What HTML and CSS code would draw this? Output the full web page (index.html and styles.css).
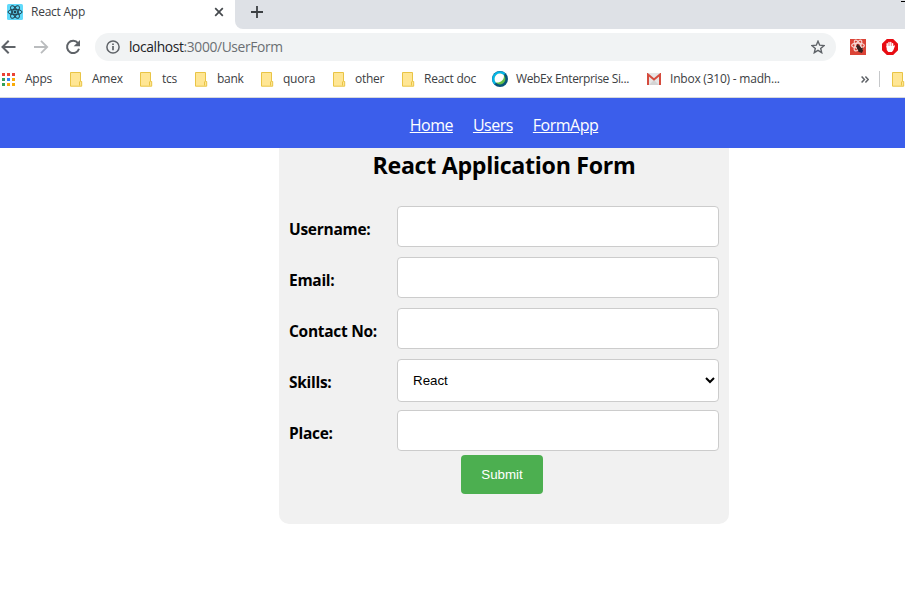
FILE: index.html
```html
<!DOCTYPE html>
<html lang="en">
<head>
<meta charset="utf-8">
<title>React App</title>
<link rel="stylesheet" href="styles.css">
</head>
<body>
<svg class="defs" width="0" height="0">
  <symbol id="folder" viewBox="0 0 13 15"><path d="M.5.5h10v9h1.2v4.7H.5z" fill="#ffe694" stroke="#e9c445"/><path d="M9.5 13.5v-4" fill="none" stroke="#e9c445"/></symbol>
</svg>
<header class="browser">
  <div class="tabstrip">
    <div class="tab">
      <svg class="favicon" width="16" height="16" viewBox="0 0 16 16"><rect width="16" height="16" rx="1.5" fill="#61dafb"/><g fill="none" stroke="#20404d" stroke-width="1"><ellipse cx="8" cy="8" rx="7" ry="2.7"/><ellipse cx="8" cy="8" rx="7" ry="2.7" transform="rotate(60 8 8)"/><ellipse cx="8" cy="8" rx="7" ry="2.7" transform="rotate(120 8 8)"/></g><circle cx="8" cy="8" r="1.4" fill="#20404d"/></svg>
      <span class="tab-title">React App</span>
      <svg class="close" width="10" height="10" viewBox="0 0 10 10"><path d="M1.2 1.2l7.6 7.6M8.8 1.2L1.2 8.8" stroke="#45494d" stroke-width="1.7"/></svg>
    </div>
    <div class="strip-rest">
      <svg width="12" height="12" viewBox="0 0 12 12"><path d="M6 0v12M0 6h12" stroke="#3c4043" stroke-width="1.8"/></svg>
      <span class="minimize"></span>
    </div>
  </div>
  <div class="toolbar">
    <svg class="back" width="16" height="16" viewBox="0 0 16 16"><path d="M15.5 8H3M8.7 1.8L2.5 8l6.2 6.2" fill="none" stroke="#5f6368" stroke-width="2"/></svg>
    <svg class="forward" width="16" height="16" viewBox="0 0 16 16"><path d="M0 8h12.8M7 1.8L13.2 8 7 14.2" fill="none" stroke="#babcbe" stroke-width="1.8"/></svg>
    <svg class="reload" width="16" height="16" viewBox="0 0 16 16"><path d="M13 4.2A6.1 6.1 0 1 0 14 9.7" fill="none" stroke="#5f6368" stroke-width="2"/><path d="M15 1v6.3H8.7z" fill="#5f6368"/></svg>
    <div class="omnibox">
      <svg width="14" height="14" viewBox="0 0 14 14"><circle cx="7" cy="7" r="6.1" fill="none" stroke="#5f6368" stroke-width="1.5"/><path d="M7 6v4.3M7 3.4v1.5" stroke="#5f6368" stroke-width="1.7"/></svg>
      <span class="url"><b>localhost</b>:3000/UserForm</span>
      <svg width="14" height="14" viewBox="0 0 14 14"><path d="M7 1.2l1.7 4 4.3.4-3.3 2.8 1 4.3L7 10.4l-3.7 2.3 1-4.3L1 5.6l4.3-.4z" fill="none" stroke="#5f6368" stroke-width="1.4"/></svg>
    </div>
    <svg class="extension" width="16" height="16" viewBox="0 0 16 16"><rect width="16" height="16" fill="#db4437"/><g fill="none" stroke="#f7d9d5" stroke-width="1.2"><ellipse cx="8" cy="6.5" rx="6.3" ry="2.4"/><ellipse cx="8" cy="6.5" rx="6" ry="2.4" transform="rotate(60 8 6.5)"/><ellipse cx="8" cy="6.5" rx="6" ry="2.4" transform="rotate(120 8 6.5)"/></g><path d="M6 7l3-1 4 5-1 3-3-1z" fill="#33211f"/><path d="M8 5l-1 3M13 9l-3 1M13 12l-3-1M7 10l2-1M9 13v-2" stroke="#33211f"/></svg>
    <svg class="blocker" width="16" height="16" viewBox="0 0 16 16"><path d="M4.8 0h6.4L16 4.8v6.4L11.2 16H4.8L0 11.2V4.8z" fill="#e80c13"/><path d="M5.2 8V4.8M7 7V3.4M8.8 7V3.4M10.6 8V4.6" stroke="#fff" stroke-width="1.4" stroke-linecap="round"/><path d="M4.5 7h6.8l1.2-.8.5.6-1.7 4.4-1.4 1.7H6.3L4.8 11z" fill="#fff"/></svg>
  </div>
  <nav class="bookmarks">
    <div class="bookmark apps"><svg width="13" height="13" viewBox="0 0 13 13"><path d="M0 0h3v3H0zM5 0h3v3H5zM10 0h3v3h-3z" fill="#ea4335"/><path d="M0 5h3v3H0zM0 10h3v3H0z" fill="#34a05a"/><path d="M5 5h3v3H5z" fill="#3185f5"/><path d="M10 5h3v3h-3zM5 10h3v3H5zM10 10h3v3h-3z" fill="#f9ab08"/></svg><span>Apps</span></div>
    <div class="bookmark"><svg width="13" height="15"><use href="#folder"/></svg><span>Amex</span></div>
    <div class="bookmark"><svg width="13" height="15"><use href="#folder"/></svg><span>tcs</span></div>
    <div class="bookmark"><svg width="13" height="15"><use href="#folder"/></svg><span>bank</span></div>
    <div class="bookmark"><svg width="13" height="15"><use href="#folder"/></svg><span>quora</span></div>
    <div class="bookmark"><svg width="13" height="15"><use href="#folder"/></svg><span>other</span></div>
    <div class="bookmark"><svg width="13" height="15"><use href="#folder"/></svg><span>React doc</span></div>
    <div class="bookmark webex"><svg width="16" height="16" viewBox="0 0 16 16"><circle cx="8" cy="8" r="8" fill="#07557a"/><path d="M2.2 13.5A8 8 0 0 1 13.5 2.2L8 8z" fill="#05b5e8"/><circle cx="8" cy="8" r="5.4" fill="#62bd46"/><path d="M4 11.5A5.3 5.3 0 0 1 11.8 4.2C12.7 8 9 12 4 11.5z" fill="#fff"/></svg><span>WebEx Enterprise Si...</span></div>
    <div class="bookmark gmail"><svg width="14" height="12" viewBox="0 0 14 12"><path d="M0 0h14v12H0z" fill="#e6e6e6"/><path d="M2 12l5-5 5 5z" fill="#d4d4d4"/><path d="M1 12V1.5l6 5 6-5V12" fill="none" stroke="#d54b3d" stroke-width="2"/></svg><span>Inbox (310) - madh...</span></div>
    <svg class="more" width="8" height="7" viewBox="0 0 8 7"><path d="M.6.6l2.8 2.9L.6 6.4M4.4.6l2.8 2.9-2.8 2.9" fill="none" stroke="#5f6368" stroke-width="1.5"/></svg>
    <div class="overflow"><svg width="13" height="15"><use href="#folder"/></svg></div>
  </nav>
</header>
<nav class="site-nav"><a href="#">Home</a><a href="#">Users</a><a href="#">FormApp</a></nav>
<form class="card">
  <h2>React Application Form</h2>
  <div class="row"><label for="user">Username:</label><input id="user" type="text"></div>
  <div class="row"><label for="email">Email:</label><input id="email" type="text"></div>
  <div class="row"><label for="contact">Contact No:</label><input id="contact" type="text"></div>
  <div class="row"><label for="skills">Skills:</label><select id="skills"><option>React</option></select></div>
  <div class="row"><label for="place">Place:</label><input id="place" type="text"></div>
  <button type="button">Submit</button>
</form>
</body>
</html>
```
FILE: styles.css
```css
* { box-sizing: border-box; }
body { margin: 0; height: 598px; overflow: hidden; background: #fff; color: #000; font-family: "Open Sans", "Noto Sans", sans-serif; }
svg { display: block; flex: none; }
.defs { position: absolute; }
.browser { height: 98px; border-bottom: 1px solid #d6d9dc; color: #3c4043; font-size: 12px; }
.tabstrip { display: flex; height: 29px; background: #fff; }
.tab { display: flex; align-items: center; width: 235px; padding: 0 11px 5px 7px; }
.tab-title { flex: 1; margin-left: 8px; padding-bottom: 1px; letter-spacing: -0.25px; }
.strip-rest { position: relative; display: flex; flex: 1; align-items: center; padding: 0 0 5px 16px; background: #dee1e6; border-bottom-left-radius: 8px; }
.minimize { position: absolute; top: 1px; right: 0; width: 4px; height: 1px; background: #000; }
.toolbar { display: flex; align-items: center; height: 36px; }
.forward { margin-left: 18px; }
.reload { margin-left: 15px; }
.omnibox { display: flex; align-items: center; width: 741px; height: 28px; margin-left: 14px; padding: 0 11px; border-radius: 14px; background: #f1f3f4; }
.url { flex: 1; margin-left: 9px; padding-bottom: 1px; font-size: 13.8px; letter-spacing: -0.36px; color: #6b6f73; }
.url b { font-weight: 400; color: #202124; }
.extension { margin-left: 14px; }
.blocker { margin-left: 16px; }
.bookmarks { display: grid; grid-template-columns: 68px 70px 55px 66px 72px 69px 90px 155px 214px 18px 26px; align-items: center; height: 28px; padding-left: 2px; }
.bookmark { display: flex; align-items: center; white-space: nowrap; letter-spacing: -0.25px; }
.bookmark span { padding-bottom: 1px; }
.bookmark svg { margin-right: 9px; }
.apps svg { margin-right: 10px; }
.webex svg { margin-right: 8px; }
.webex { letter-spacing: -0.37px; }
.gmail { letter-spacing: -0.22px; }
.overflow { display: flex; align-items: center; height: 16px; padding-left: 12px; border-left: 1px solid #c6c8ca; }
.site-nav { display: flex; justify-content: center; align-items: center; gap: 20px; height: 50px; padding: 3px 0 0 103px; background: #3b5eeb; font-size: 16px; line-height: 22px; letter-spacing: -0.5px; }
.site-nav a { color: #fff; }
.card { width: 450px; height: 376px; margin-left: 279px; padding: 0 10px; background: #f1f1f1; border-radius: 0 0 10px 10px; }
h2 { height: 58px; margin: 0; font-size: 23.2px; line-height: 34px; text-align: center; white-space: nowrap; letter-spacing: -0.3px; }
.row { display: flex; align-items: flex-start; height: 51px; }
label { width: 108px; padding-top: 12px; font-size: 15.5px; line-height: 22px; font-weight: 700; letter-spacing: -0.28px; }
input, select { width: 322px; height: 41px; margin: 0; border: 1px solid #ccc; border-radius: 4px; background: #fff; color: #000; font: 13.333px "Liberation Sans", sans-serif; }
select { height: 43px; padding: 0 0 0 11px; }
button { display: block; width: 82px; height: 39px; margin: -6px 0 0 172px; padding: 0; border: 0; border-radius: 4px; background: #4caf50; color: #fff; font: 13.333px "Liberation Sans", sans-serif; }
```
